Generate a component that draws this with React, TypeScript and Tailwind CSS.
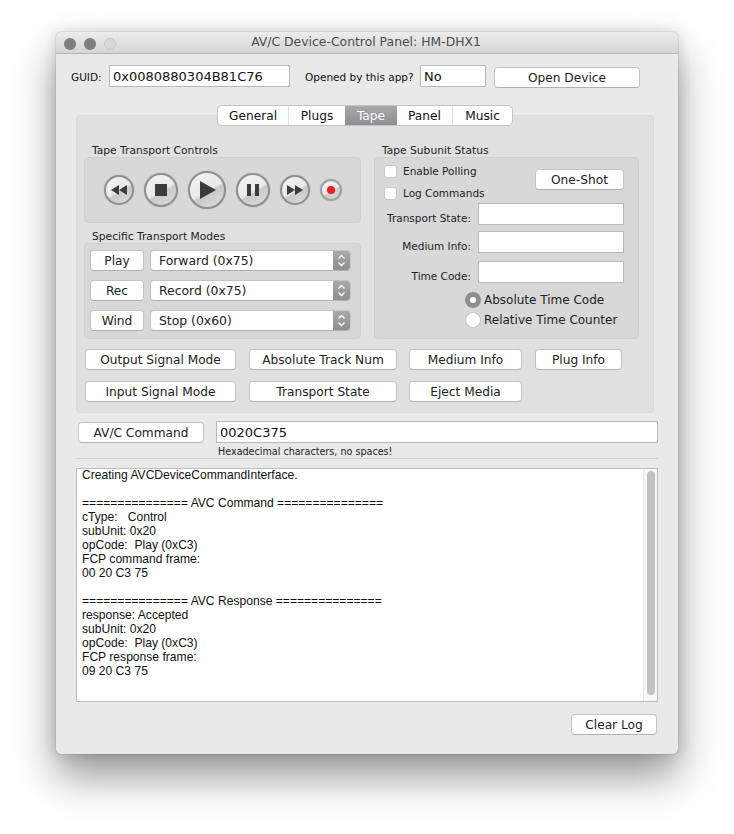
import { ReactNode } from 'react';

const LOG = `Creating AVCDeviceCommandInterface.

=============== AVC Command ===============
cType:   Control
subUnit: 0x20
opCode:  Play (0xC3)
FCP command frame:
00 20 C3 75

=============== AVC Response ===============
response: Accepted
subUnit: 0x20
opCode:  Play (0xC3)
FCP response frame:
09 20 C3 75`;

const UI_FONT = 'font-["DejaVu_Sans",sans-serif]';

function Btn({ className, children }: { className: string; children: ReactNode }) {
    return (
        <button
            className={`flex h-[21px] shrink-0 items-center justify-center rounded-[4px] border border-[#c4c4c4] border-b-[#b0b0b0] bg-white pt-px text-[12.2px] text-[#222] ${className}`}
        >
            {children}
        </button>
    );
}

function Field({ className, children }: { className: string; children?: ReactNode }) {
    return (
        <div className={`flex h-[22px] shrink-0 items-center border border-[#b9b9b9] bg-white px-[3px] pt-px text-[#111] ${className}`}>
            {children}
        </div>
    );
}

function RoundBtn({ className, children }: { className: string; children: ReactNode }) {
    return (
        <div
            className={`flex shrink-0 items-center justify-center rounded-full border-2 bg-[linear-gradient(150deg,#f4f4f4_0%,#e9e9e9_52%,#c9c9c9_58%,#dedede_100%)] shadow-[0_0_1px_rgba(0,0,0,0.35)] ${className}`}
        >
            {children}
        </div>
    );
}

function ModeRow({ label, value }: { label: string; value: string }) {
    return (
        <div className="flex gap-[6px]">
            <Btn className="w-[54px]">{label}</Btn>
            <div className="flex h-[21px] w-[201px] overflow-hidden rounded-[4px] border border-[#c4c4c4] border-b-[#b0b0b0] bg-white">
                <span className="flex-1 pl-[8px] text-[12.4px] leading-[20px] text-[#222]">{value}</span>
                <span className="flex w-[17px] items-center justify-center bg-[linear-gradient(#a8a8a8,#8f8f8f)]">
                    <svg width="9" height="15" viewBox="0 0 9 15" fill="none" stroke="#fff" strokeWidth="1.3">
                        <path d="M1.5 5.5 4.5 2.5 7.5 5.5" />
                        <path d="M1.5 9.5 4.5 12.5 7.5 9.5" />
                    </svg>
                </span>
            </div>
        </div>
    );
}

function CheckRow({ label }: { label: string }) {
    return (
        <div className="flex h-[13px] items-center gap-[6px] text-[10.5px] text-[#222]">
            <span className="h-[13px] w-[13px] rounded-[3px] border border-[#c8c8c8] bg-white" />
            <span className="pt-px">{label}</span>
        </div>
    );
}

function StatusRow({ label, className }: { label: string; className: string }) {
    return (
        <div className={`flex h-[22px] items-start ${className}`}>
            <span className="h-[22px] w-[103px] pr-[7px] text-right text-[10.5px] leading-[30px] text-[#222]">{label}</span>
            <Field className="w-[146px]" />
        </div>
    );
}

export default function App() {
    return (
        <div className={`h-[834px] w-[734px] overflow-hidden bg-white pl-[56px] pt-[32px] ${UI_FONT}`}>
            <div className="h-[722px] w-[622px] rounded-[5px] bg-[#e9e9e9] shadow-[0_22px_42px_rgba(0,0,0,0.42),0_0_14px_rgba(0,0,0,0.14),0_0_1px_rgba(0,0,0,0.5)]">
                {/* Title bar */}
                <div className="relative flex h-[22px] items-center justify-center rounded-t-[5px] border-b border-[#b4b4b4] bg-[linear-gradient(#ececec,#d5d5d5)] pr-[2px] text-[12.4px] text-[#4c4c4c]">
                    <div className="absolute left-[8px] top-[6px] flex gap-[8px]">
                        <span className="h-[12px] w-[12px] rounded-full bg-[#7e7e80]" />
                        <span className="h-[12px] w-[12px] rounded-full bg-[#7e7e80]" />
                        <span className="h-[12px] w-[12px] rounded-full border border-[#c8c8c8] bg-[#d8d8d8]" />
                    </div>
                    AV/C Device-Control Panel: HM-DHX1
                </div>

                {/* Device row */}
                <div className="ml-[15px] mt-[11px] flex h-[22px] items-center">
                    <span className="w-[38px] pt-[3px] text-[10.5px] text-[#111]">GUID:</span>
                    <Field className="w-[181px] text-[13px]">0x0080880304B81C76</Field>
                    <span className="ml-[15px] w-[115px] whitespace-nowrap pt-[3px] text-[10.5px] text-[#111]">Opened by this app?</span>
                    <Field className="w-[66px] text-[13px]">No</Field>
                    <Btn className="ml-[8px] mt-[3px] w-[146px]">Open Device</Btn>
                </div>

                {/* Tabs */}
                <div className="relative z-10 mt-[18px] flex justify-center pr-[4px]">
                    <div className="flex h-[21px] overflow-hidden rounded-[5px] border border-[#c4c4c4] bg-white text-[12.2px] text-[#111]">
                        <span className="flex w-[71px] items-center justify-center border-r border-[#e2e2e2] pt-px">General</span>
                        <span className="flex w-[56px] items-center justify-center pt-px">Plugs</span>
                        <span className="flex w-[52px] items-center justify-center bg-[linear-gradient(#a9a9ab,#8f8f91)] pt-px text-white">Tape</span>
                        <span className="flex w-[56px] items-center justify-center border-r border-[#e2e2e2] pt-px">Panel</span>
                        <span className="flex w-[59px] items-center justify-center pt-px">Music</span>
                    </div>
                </div>

                {/* Tab panel */}
                <div className="ml-[20px] mt-[-11px] h-[298px] w-[578px] rounded-[4px] border border-[#dadada] bg-[#e0e0e0] px-[7px] pt-[28px]">
                    <div className="flex gap-[13px]">
                        <div className="w-[277px]">
                            <div className="ml-[8px] h-[13px] text-[10.7px] leading-[13px] text-[#222]">Tape Transport Controls</div>
                            <div className="flex h-[66px] items-center gap-[10px] rounded-[4px] border border-[#d0d0d0] bg-[#d8d8d8] pl-[19px]">
                                <RoundBtn className="h-[30px] w-[30px] border-[#8f8f8f]">
                                    <svg width="18" height="10" viewBox="0 0 18 10" fill="#3c3c3c">
                                        <path d="M9 0V10L1 5Z" />
                                        <path d="M17 0V10L9 5Z" />
                                    </svg>
                                </RoundBtn>
                                <RoundBtn className="h-[34px] w-[34px] border-[#8f8f8f]">
                                    <span className="h-[12px] w-[12px] bg-[#3c3c3c]" />
                                </RoundBtn>
                                <RoundBtn className="h-[38px] w-[38px] border-[#8f8f8f]">
                                    <svg width="18" height="20" viewBox="0 0 18 20" fill="#3c3c3c" className="ml-[2px]">
                                        <path d="M1 1V19L17 10Z" />
                                    </svg>
                                </RoundBtn>
                                <RoundBtn className="h-[34px] w-[34px] border-[#8f8f8f]">
                                    <svg width="12" height="12" viewBox="0 0 12 12" fill="#3c3c3c">
                                        <path d="M0 0H4V12H0ZM8 0H12V12H8Z" />
                                    </svg>
                                </RoundBtn>
                                <RoundBtn className="h-[30px] w-[30px] border-[#8f8f8f]">
                                    <svg width="18" height="10" viewBox="0 0 18 10" fill="#3c3c3c">
                                        <path d="M1 0V10L9 5Z" />
                                        <path d="M9 0V10L17 5Z" />
                                    </svg>
                                </RoundBtn>
                                <RoundBtn className="h-[22px] w-[22px] border-[#a2a2a2]">
                                    <span className="h-[8px] w-[8px] rounded-full bg-[#ee1c25]" />
                                </RoundBtn>
                            </div>
                            <div className="ml-[8px] mt-[7px] h-[13px] text-[10.7px] leading-[13px] text-[#222]">Specific Transport Modes</div>
                            <div className="flex h-[96px] flex-col gap-[9px] rounded-[4px] border border-[#d0d0d0] bg-[#d8d8d8] pl-[5px] pt-[6px]">
                                <ModeRow label="Play" value="Forward (0x75)" />
                                <ModeRow label="Rec" value="Record (0x75)" />
                                <ModeRow label="Wind" value="Stop (0x60)" />
                            </div>
                        </div>

                        <div className="w-[265px]">
                            <div className="ml-[8px] h-[13px] text-[10.7px] leading-[13px] text-[#222]">Tape Subunit Status</div>
                            <div className="h-[182px] rounded-[4px] border border-[#d0d0d0] bg-[#d8d8d8]">
                                <div className="flex h-[45px] items-start">
                                    <div className="ml-[9px] mt-[7px] flex w-[151px] flex-col gap-[9px]">
                                        <CheckRow label="Enable Polling" />
                                        <CheckRow label="Log Commands" />
                                    </div>
                                    <Btn className="mt-[11px] w-[89px]">One-Shot</Btn>
                                </div>
                                <StatusRow label="Transport State:" className="" />
                                <StatusRow label="Medium Info:" className="mt-[6px]" />
                                <StatusRow label="Time Code:" className="mt-[8px]" />
                                <div className="ml-[90px] mt-[9px] flex items-center gap-[3px] text-[12px] leading-[16px] text-[#222]">
                                    <span className="flex h-[16px] w-[16px] items-center justify-center rounded-full bg-[#8f8f91]">
                                        <span className="h-[6px] w-[6px] rounded-full bg-white" />
                                    </span>
                                    Absolute Time Code
                                </div>
                                <div className="ml-[90px] mt-[4px] flex items-center gap-[3px] text-[12px] leading-[16px] text-[#222]">
                                    <span className="h-[16px] w-[16px] rounded-full border border-[#c4c4c4] bg-white" />
                                    Relative Time Counter
                                </div>
                            </div>
                        </div>
                    </div>

                    <div className="mt-[10px] flex pl-[1px]">
                        <Btn className="w-[151px]">Output Signal Mode</Btn>
                        <Btn className="ml-[13px] w-[148px]">Absolute Track Num</Btn>
                        <Btn className="ml-[12px] w-[113px]">Medium Info</Btn>
                        <Btn className="ml-[13px] w-[87px]">Plug Info</Btn>
                    </div>
                    <div className="mt-[11px] flex pl-[1px]">
                        <Btn className="w-[151px]">Input Signal Mode</Btn>
                        <Btn className="ml-[13px] w-[148px]">Transport State</Btn>
                        <Btn className="ml-[12px] w-[113px]">Eject Media</Btn>
                    </div>
                </div>

                {/* Command row */}
                <div className="ml-[22px] mt-[8px] flex items-start">
                    <Btn className="mt-[1px] w-[126px]">AV/C Command</Btn>
                    <Field className="ml-[12px] w-[442px] text-[13px]">0020C375</Field>
                </div>
                <div className="ml-[162px] mt-[2px] h-[13px] text-[9.6px] leading-[14px] text-[#222]">Hexadecimal characters, no spaces!</div>
                <div className="ml-[20px] h-px w-[582px] bg-[#d2d2d2]" />

                {/* Log */}
                <div className="ml-[20px] mt-[9px] flex h-[234px] w-[582px] border border-[#bdbdbd] bg-white">
                    <pre className="mt-[-1px] flex-1 pl-[5px] font-['Liberation_Sans',sans-serif] text-[12.1px] leading-[14px] text-[#111]">{LOG}</pre>
                    <div className="flex w-[14px] justify-center border-l border-[#e6e6e6] bg-[#f8f8f8] pt-[2px]">
                        <div className="h-[224px] w-[8px] rounded-full bg-[#c2c2c2]" />
                    </div>
                </div>

                <div className="mt-[12px] flex justify-end pr-[21px]">
                    <Btn className="w-[86px]">Clear Log</Btn>
                </div>
            </div>
        </div>
    );
}
